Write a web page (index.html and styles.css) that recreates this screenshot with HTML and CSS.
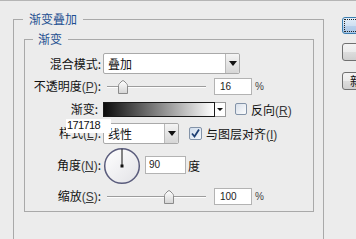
FILE: index.html
```html
<!DOCTYPE html>
<html>
<head>
<meta charset="utf-8">
<link rel="stylesheet" href="styles.css">
</head>
<body>
<div class="dialog">
  <div class="main">
    <fieldset class="outer">
      <legend class="title">渐变叠加</legend>
      <fieldset class="inner">
        <legend class="title">渐变</legend>
        <div class="form">
          <div class="lbl">混合模式:</div>
          <div class="ctl">
            <div class="select s-wide"><span class="val">叠加</span><span class="drop"><i class="tri"></i></span></div>
          </div>

          <div class="lbl">不透明度<span class="mn">(<u>P</u>)</span>:</div>
          <div class="ctl">
            <div class="slider">
              <div class="track"></div>
              <svg class="thumb" style="left:11px" width="10" height="14" viewBox="0 0 10 14"><defs><linearGradient id="tg1" x1="0" y1="0" x2="0" y2="1"><stop offset="0" stop-color="#ffffff"/><stop offset="1" stop-color="#d4d4d4"/></linearGradient></defs><path d="M0.5 13.5 V5.5 Q0.5 4.5 1.5 3.5 L4 1 Q5 0.2 6 1 L8.5 3.5 Q9.5 4.5 9.5 5.5 V13.5 Z" fill="url(#tg1)" stroke="#8b8b8b"/></svg>
            </div>
            <div class="num">16</div><span class="pct">%</span>
          </div>

          <div class="lbl lbl-short">渐变:</div>
          <div class="ctl">
            <div class="gradient"><span class="gbar"></span><span class="garrow"><i class="tri small"></i></span></div>
            <span class="check"></span><span class="opt">反向<span class="mn">(<u>R</u>)</span></span>
          </div>

          <div class="lbl">样式<span class="mn">(<u>L</u>)</span>:</div>
          <div class="ctl">
            <div class="select s-narrow"><span class="val">线性</span><span class="drop"><i class="tri"></i></span></div>
            <span class="check checked"><svg width="13" height="13" viewBox="0 0 13 13"><path d="M3 6.5 L5.5 9.5 L10 2.5" fill="none" stroke="#1d3f73" stroke-width="1.8"/></svg></span><span class="opt">与图层对齐<span class="mn">(<u>I</u>)</span></span>
          </div>

          <div class="lbl">角度<span class="mn">(<u>N</u>)</span>:</div>
          <div class="ctl">
            <svg class="dial" width="38" height="38" viewBox="0 0 38 38"><defs><linearGradient id="dg" x1="0" y1="0" x2="1" y2="1"><stop offset="0" stop-color="#ffffff"/><stop offset="1" stop-color="#e2e2e6"/></linearGradient></defs><circle cx="19" cy="19" r="17.3" fill="url(#dg)" stroke="#5a5c7c" stroke-width="1.5"/><line x1="19" y1="19" x2="19" y2="2" stroke="#111" stroke-width="1"/><rect x="17.5" y="17.5" width="3" height="3" fill="#111"/></svg>
            <div class="num num-wide">90</div><span class="unit">度</span>
          </div>

          <div class="lbl">缩放<span class="mn">(<u>S</u>)</span>:</div>
          <div class="ctl">
            <div class="slider">
              <div class="track"></div>
              <svg class="thumb" style="left:57px" width="10" height="14" viewBox="0 0 10 14"><defs><linearGradient id="tg2" x1="0" y1="0" x2="0" y2="1"><stop offset="0" stop-color="#ffffff"/><stop offset="1" stop-color="#d4d4d4"/></linearGradient></defs><path d="M0.5 13.5 V5.5 Q0.5 4.5 1.5 3.5 L4 1 Q5 0.2 6 1 L8.5 3.5 Q9.5 4.5 9.5 5.5 V13.5 Z" fill="url(#tg2)" stroke="#8b8b8b"/></svg>
            </div>
            <div class="num">100</div><span class="pct">%</span>
          </div>

          <div class="tip">171718</div>
        </div>
      </fieldset>
    </fieldset>
  </div>
  <div class="side">
    <div class="btn b1">确定</div>
    <div class="btn b2">取消</div>
    <div class="btn b3">新建样式(W)...</div>
  </div>
</div>
</body>
</html>
```

FILE: styles.css
```css
* { box-sizing: border-box; }
html, body { margin: 0; }
body {
  width: 356px;
  height: 239px;
  overflow: hidden;
  background: #ececec;
  border-top: 1px solid #b5b5b5;
  font-family: "Noto Sans CJK SC", "Noto Sans", sans-serif;
  font-size: 12px;
  color: #111;
}
.dialog { display: flex; align-items: flex-start; }
.main { flex: none; width: 324px; padding: 11px 0 0 13px; }

.outer {
  margin: 0;
  padding: 6px 0 0 0;
  border: 1px solid #a9a9a9;
  min-width: 0;
  width: 311px;
  height: 260px;
}
.title {
  color: #1d4f91;
  line-height: 14px;
  padding: 0 6px;
}
.outer > .title { margin-left: 9px; }
.inner {
  margin: 0 0 0 10px;
  width: 290px;
  padding: 7px 0 0 0;
  border: 1px solid #a9a9a9;
  min-width: 0;
}
.inner > .title { margin-left: 8px; padding: 0 6px 0 5px; }

.form {
  position: relative;
  display: grid;
  grid-template-columns: 76px 1fr;
  grid-template-rows: 21px 25px 20px 29px 34px 29px;
}
.lbl {
  align-self: center;
  text-align: right;
  line-height: 14px;
  white-space: nowrap;
}
.lbl-short { padding-right: 3px; }
.mn {
  font-family: "Liberation Sans", sans-serif;
  font-size: 12px;
  color: #3a3a3a;
}
.ctl {
  display: flex;
  align-items: center;
  padding-left: 2px;
  white-space: nowrap;
}

.select {
  display: flex;
  height: 21px;
  border: 1px solid #a9a9a9;
  border-radius: 2px;
  background: #fff;
}
.s-wide { width: 137px; }
.s-narrow { width: 76px; }
.val { flex: 1; padding-left: 4px; line-height: 19px; }
.drop {
  width: 14px;
  display: flex;
  align-items: center;
  justify-content: center;
  border-left: 1px solid #b9b9b9;
  border-radius: 0 2px 2px 0;
  background: linear-gradient(#f4f4f4, #d6d6d6);
}
.tri {
  width: 0; height: 0;
  border-left: 4px solid transparent;
  border-right: 4px solid transparent;
  border-top: 5px solid #111;
}
.tri.small {
  border-left-width: 3px;
  border-right-width: 3px;
  border-top-width: 3px;
}

.slider {
  position: relative;
  width: 99px;
  height: 14px;
  margin-left: 4px;
  display: flex;
  align-items: center;
}
.track {
  width: 100%;
  height: 2px;
  border-top: 1px solid #9c9c9c;
  background: #fdfdfd;
}
.thumb { position: absolute; top: 0; }

.num {
  width: 38px;
  height: 17px;
  margin-left: 8px;
  border: 1px solid #b3b3b3;
  background: #fff;
  font-family: "Liberation Sans", sans-serif;
  font-size: 10px;
  line-height: 15px;
  padding-left: 5px;
  color: #222;
}
.num-wide { width: 41px; height: 18px; margin-left: 4px; padding-left: 3px; line-height: 16px; }
.pct {
  margin-left: 3px;
  font-family: "Liberation Sans", sans-serif;
  font-size: 10px;
  color: #444;
}
.unit { margin-left: 2px; }

.gradient { display: flex; height: 15px; }
.gbar {
  width: 112px;
  border: 1px solid #1a1a1a;
  background: linear-gradient(90deg, #0d0d0d, #ffffff);
}
.garrow {
  width: 11px;
  border: 1px solid #9a9a9a;
  border-left: 0;
  background: #fff;
  display: flex;
  align-items: center;
  justify-content: center;
}

.check {
  width: 12px;
  height: 12px;
  margin-left: 9px;
  border: 1px solid #8393a8;
  border-radius: 2px;
  background: linear-gradient(135deg, #d9e0ea, #fbfcfd);
  display: flex;
}
.check.checked { width: 13px; height: 13px; margin-left: 10px; background: linear-gradient(135deg, #cfdcec, #f4f7fb); }
.check svg { margin: -1px; }
.opt { margin-left: 4px; }

.dial { margin-left: 0; margin-top: 1px; }

.tip {
  position: absolute;
  left: 41px;
  top: 66px;
  width: 45px;
  height: 14px;
  background: #fff;
  font-family: "Liberation Sans", sans-serif;
  font-size: 11px;
  letter-spacing: -0.6px;
  line-height: 13px;
  padding-left: 1px;
  color: #111;
}

.side {
  flex: none;
  display: flex;
  flex-direction: column;
  padding-top: 16px;
  margin-left: 18px;
}
.btn {
  width: 88px;
  height: 18px;
  border: 1px solid #707070;
  border-radius: 3px;
  background: linear-gradient(#f3f3f3 0%, #ebebeb 50%, #dddddd 51%, #cfcfcf 100%);
  text-align: center;
  line-height: 16px;
  color: #111;
  white-space: nowrap;
  overflow: hidden;
}
.b1 {
  height: 17px;
  border-color: #3c7fb1;
  background: linear-gradient(#e3eef9 0%, #cfe0f2 50%, #b9d1ec 51%, #a9c6e6 100%);
  outline: 1px dotted #222;
  outline-offset: -3px;
  color: transparent;
}
.b2 { margin-top: 9px; color: transparent; }
.b3 { margin-top: 11px; text-align: left; padding-left: 7px; }
```
